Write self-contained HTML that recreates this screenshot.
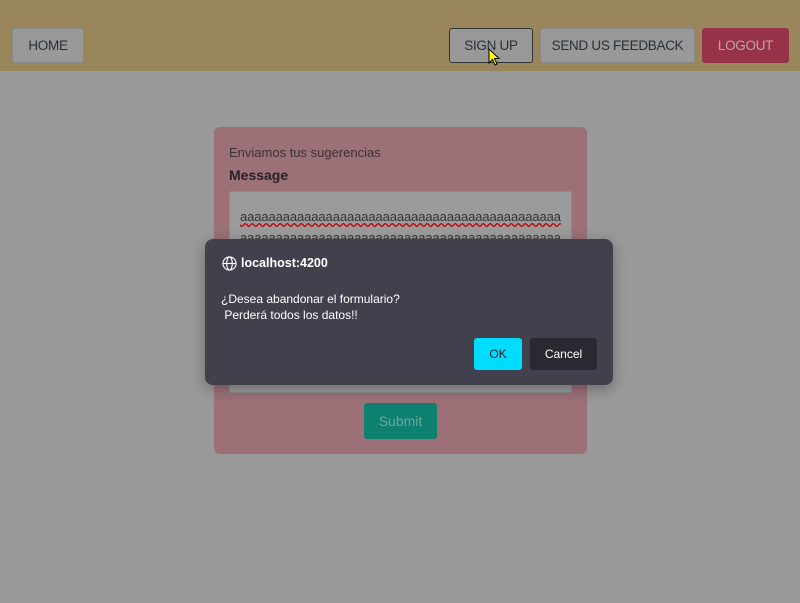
<!DOCTYPE html>
<html><head><style>
*{box-sizing:border-box;margin:0;padding:0}
body{width:800px;height:603px;background:#999999;font-family:"Liberation Sans",sans-serif;position:relative;overflow:hidden}
.hdr{position:absolute;left:0;top:0;width:800px;height:71px;background:#9a865c}
.btn{position:absolute;top:28px;height:35px;border-radius:3px;font-size:13.5px;color:#2b2f36;display:flex;align-items:center;justify-content:center;background:#999999;border:1px solid #8a8a8a;letter-spacing:-0.3px;white-space:nowrap}
.card{position:absolute;left:214px;top:127px;width:373px;height:327px;background:#9b7077;border-radius:6px}
.ta{position:absolute;left:229px;top:191px;width:343px;height:202px;background:#9b9b9b;border:1px solid #8c8c8c;border-radius:2px;font-size:13px;color:#333;padding:14px 10px;line-height:21px;overflow:hidden;letter-spacing:-0.1px;white-space:nowrap}
.dlg{position:absolute;left:205px;top:239px;width:408px;height:146px;background:#42404d;border-radius:8px;box-shadow:0 4px 14px rgba(0,0,0,.3);color:#fff;font-size:12px}
</style></head><body>
<div class="hdr"></div>
<div class="btn" style="left:12px;width:72px">HOME</div>
<div class="btn" style="left:449px;width:84px;border-color:#333">SIGN UP</div>
<div class="btn" style="left:540px;width:155px">SEND US FEEDBACK</div>
<div class="btn" style="left:702px;width:87px;background:#963349;border-color:#963349;color:#bfa0a8">LOGOUT</div>
<svg style="position:absolute;left:488px;top:48px" width="14" height="20"><path d="M1 1 L1 15 L4.5 11.5 L7 17 L9 16 L6.5 10.5 L11 10.5 Z" fill="#ffff00" stroke="#000" stroke-width="1"/></svg>
<div class="card"></div>
<div style="position:absolute;left:229px;top:145px;font-size:13px;color:#3c3237">Enviamos tus sugerencias</div>
<div style="position:absolute;left:229px;top:167px;font-size:14px;font-weight:bold;color:#2b2227">Message</div>
<div class="ta"><span style="text-decoration:underline wavy #c00000">aaaaaaaaaaaaaaaaaaaaaaaaaaaaaaaaaaaaaaaaaaaaa</span><br>aaaaaaaaaaaaaaaaaaaaaaaaaaaaaaaaaaaaaaaaaaaaa</div>
<div style="position:absolute;left:364px;top:403px;width:73px;height:36px;background:#0e8070;border-radius:3px;color:#6aa89c;font-size:14px;display:flex;align-items:center;justify-content:center">Submit</div>
<div class="dlg">
<svg style="position:absolute;left:17px;top:17px" width="15" height="15" viewBox="0 0 16 16" fill="none" stroke="#fff" stroke-width="1.2"><circle cx="8" cy="8" r="7"/><ellipse cx="8" cy="8" rx="3" ry="7"/><line x1="1" y1="8" x2="15" y2="8"/></svg>
<div style="position:absolute;left:36px;top:17px;font-size:12.5px;font-weight:bold">localhost:4200</div>
<div style="position:absolute;left:16px;top:52px;line-height:16px">¿Desea abandonar el formulario?<br>&nbsp;Perderá todos los datos!!</div>
<div style="position:absolute;left:269px;top:99px;width:48px;height:32px;background:#00dcff;border-radius:3px;color:#222;display:flex;align-items:center;justify-content:center">OK</div>
<div style="position:absolute;left:325px;top:99px;width:67px;height:32px;background:#2a2830;border-radius:3px;display:flex;align-items:center;justify-content:center">Cancel</div>
</div>
</body></html>
